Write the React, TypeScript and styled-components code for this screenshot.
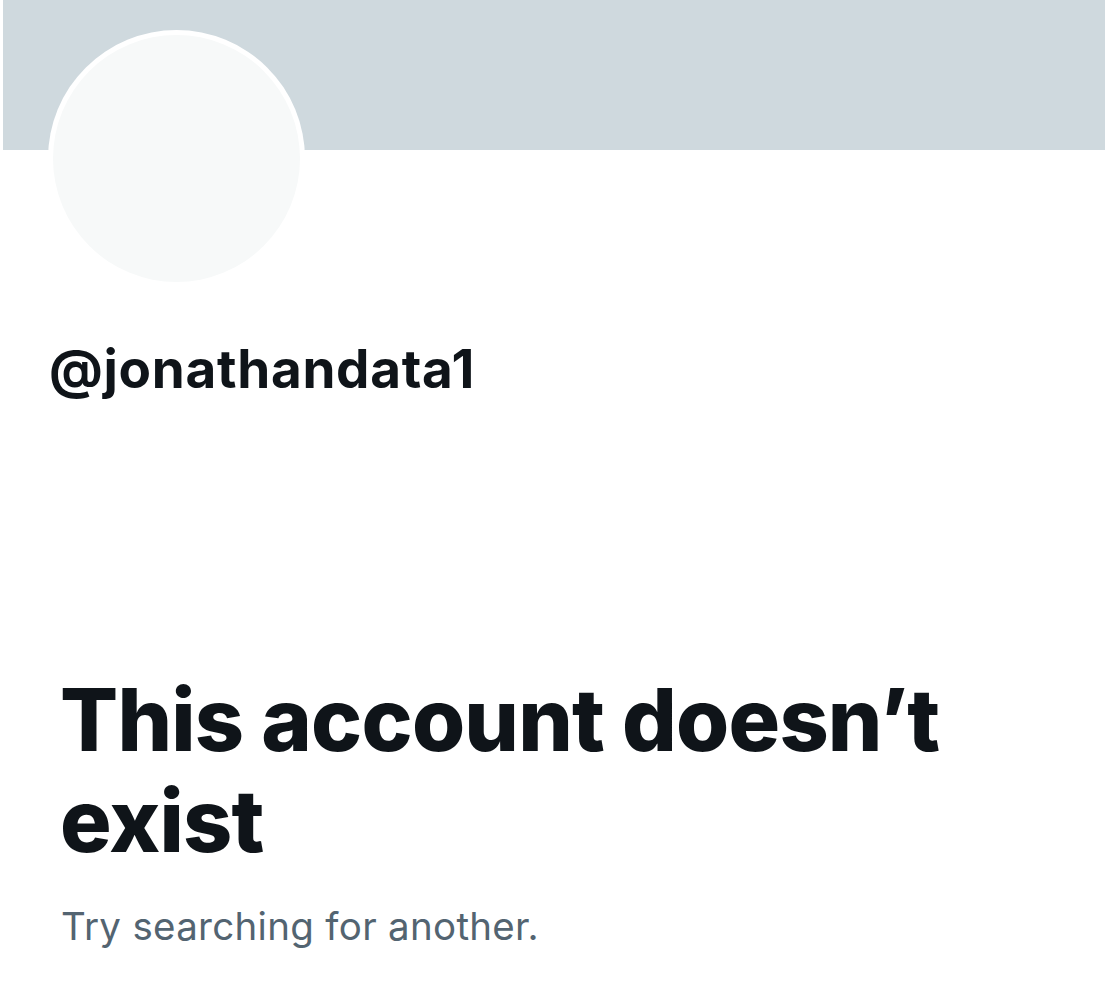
import React from "react";
import styled, { createGlobalStyle } from "styled-components";

const Global = createGlobalStyle`
  html, body { margin: 0; padding: 0; background: #ffffff; }
  body { font-family: Inter, "Noto Sans", sans-serif; color: #0f1419; }
`;

const Page = styled.div`
  width: 1105px;
  height: 993px;
  overflow: hidden;
  display: flex;
  flex-direction: column;
`;

const Banner = styled.div`
  height: 150px;
  margin-left: 3px;
  background: #cfd9de;
`;

const AvatarRow = styled.div`
  display: flex;
  padding-left: 48px;
  margin-top: -120px;
`;

const Avatar = styled.div`
  width: 257px;
  height: 257px;
  box-sizing: border-box;
  border-radius: 50%;
  background: #ffffff;
  padding: 5px;
  display: flex;
`;

const AvatarInner = styled.div`
  flex: 1;
  border-radius: 50%;
  background: #f7f9f9;
`;

const Handle = styled.div`
  margin: 52px 0 0 49px;
  font-size: 53px;
  font-weight: 700;
  line-height: 60px;
  letter-spacing: 0.7px;
`;

const Heading = styled.h1`
  margin: 271px 0 0 60px;
  font-size: 86px;
  font-weight: 800;
  line-height: 101px;
  letter-spacing: -0.8px;
  max-width: 960px;
`;

const Sub = styled.p`
  margin: 30px 0 0 61px;
  font-size: 38.5px;
  font-weight: 400;
  line-height: 48px;
  letter-spacing: 0.3px;
  color: #536471;
`;

export default function App() {
  return (
    <>
      <Global />
      <Page>
        <Banner />
        <AvatarRow>
          <Avatar>
            <AvatarInner />
          </Avatar>
        </AvatarRow>
        <Handle>@jonathandata1</Handle>
        <Heading>This account doesn’t exist</Heading>
        <Sub>Try searching for another.</Sub>
      </Page>
    </>
  );
}
